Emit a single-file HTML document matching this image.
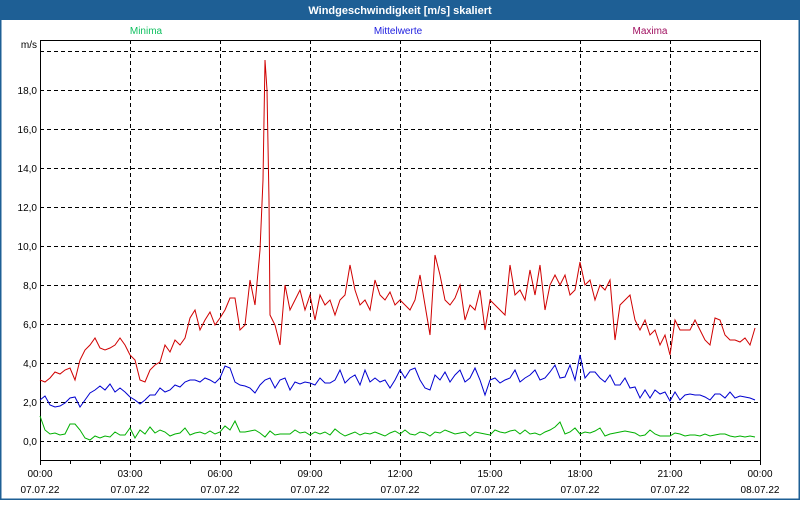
<!DOCTYPE html>
<html><head><meta charset="utf-8"><style>
html,body{margin:0;padding:0;background:#fff;}
body{width:800px;height:500px;overflow:hidden;font-family:"Liberation Sans","DejaVu Sans",sans-serif;}
</style></head><body>
<svg width="800" height="500" viewBox="0 0 800 500" xmlns="http://www.w3.org/2000/svg" font-family="Liberation Sans, DejaVu Sans, sans-serif">
<rect x="0" y="0" width="800" height="500" fill="#fff"/>
<rect x="0.5" y="0.5" width="799" height="499" fill="none" stroke="#1e5f95" stroke-width="2"/>
<rect x="0" y="0" width="800" height="20" fill="#1e5f95"/>
<text x="400" y="14" fill="#fff" font-size="11" font-weight="bold" text-anchor="middle">Windgeschwindigkeit [m/s] skaliert</text>
<text x="146" y="34" fill="#10c060" font-size="10" text-anchor="middle">Minima</text>
<text x="398" y="34" fill="#2020e0" font-size="10" text-anchor="middle">Mittelwerte</text>
<text x="650" y="34" fill="#a01060" font-size="10" text-anchor="middle">Maxima</text>
<g stroke="#000" stroke-width="1" stroke-dasharray="4,3" fill="none">
<path d="M40 51.5H760M40 90.5H760M40 129.5H760M40 168.5H760M40 207.5H760M40 246.5H760M40 285.5H760M40 324.5H760M40 363.5H760M40 402.5H760M40 441.5H760"/>
<path d="M130.5 40V460M220.5 40V460M310.5 40V460M400.5 40V460M490.5 40V460M580.5 40V460M670.5 40V460"/>
</g>
<rect x="40.5" y="40.5" width="720" height="420" fill="none" stroke="#000"/>
<g stroke="#000"><path d="M40.5 460V465M70.5 460V464M100.5 460V464M130.5 460V465M160.5 460V464M190.5 460V464M220.5 460V465M250.5 460V464M280.5 460V464M310.5 460V465M340.5 460V464M370.5 460V464M400.5 460V465M430.5 460V464M460.5 460V464M490.5 460V465M520.5 460V464M550.5 460V464M580.5 460V465M610.5 460V464M640.5 460V464M670.5 460V465M700.5 460V464M730.5 460V464M760.5 460V465"/></g>
<g font-size="10" fill="#000" text-anchor="end">
<text x="37" y="48">m/s</text>
<text x="37" y="94">18,0</text><text x="37" y="133">16,0</text><text x="37" y="172">14,0</text>
<text x="37" y="211">12,0</text><text x="37" y="250">10,0</text><text x="37" y="289">8,0</text>
<text x="37" y="328">6,0</text><text x="37" y="367">4,0</text><text x="37" y="406">2,0</text><text x="37" y="445">0,0</text>
</g>
<g font-size="10" fill="#000" text-anchor="middle">
<text x="40" y="477">00:00</text><text x="40" y="493">07.07.22</text>
<text x="130" y="477">03:00</text><text x="130" y="493">07.07.22</text>
<text x="220" y="477">06:00</text><text x="220" y="493">07.07.22</text>
<text x="310" y="477">09:00</text><text x="310" y="493">07.07.22</text>
<text x="400" y="477">12:00</text><text x="400" y="493">07.07.22</text>
<text x="490" y="477">15:00</text><text x="490" y="493">07.07.22</text>
<text x="580" y="477">18:00</text><text x="580" y="493">07.07.22</text>
<text x="670" y="477">21:00</text><text x="670" y="493">07.07.22</text>
<text x="760" y="477">00:00</text><text x="760" y="493">08.07.22</text>
</g>
<polyline fill="none" stroke="#d00000" stroke-width="1" points="40,380 45,382 50,378 55,372 60,374 65,370 70,368 75,380 80,360 85,350 90,345 95,338 100,348 105,350 110,348 115,345 120,338 125,345 130,355 135,360 140,380 145,382 150,370 155,365 160,362 165,345 170,352 175,340 180,345 185,338 190,318 195,310 200,330 205,320 210,312 215,325 220,318 225,310 230,298 235,298 240,330 245,325 250,280 255,305 260,250 263,180 265,60 267,90 269,200 270,315 275,325 280,345 285,285 290,310 295,300 300,290 305,310 310,295 315,320 320,295 325,305 330,300 335,315 340,300 345,295 350,265 355,290 360,305 365,300 370,310 375,280 380,295 385,300 390,292 395,305 400,300 405,305 410,310 415,300 420,275 425,305 430,335 435,255 440,275 445,300 450,305 455,298 460,285 465,320 470,305 475,310 480,290 485,330 490,300 495,305 500,310 505,315 510,265 515,295 520,290 525,300 530,270 535,295 540,265 545,310 550,285 555,275 560,285 565,275 570,295 575,290 580,262 585,285 590,280 595,300 600,285 605,290 610,280 615,340 620,305 625,300 630,295 635,320 640,330 645,320 650,335 655,330 660,345 665,335 670,355 675,320 680,330 685,330 690,330 695,320 700,330 705,340 710,345 715,318 720,320 725,335 730,340 735,340 740,342 745,338 750,345 755,328"/>
<polyline fill="none" stroke="#0000d0" stroke-width="1" points="40,400 45,396 50,405 55,407 60,406 65,403 70,398 75,397 80,407 85,400 90,393 95,390 100,386 105,390 110,384 115,392 120,388 125,392 130,397 135,400 140,404 145,400 150,395 155,395 160,388 165,392 170,390 175,385 180,387 185,382 190,380 195,380 200,382 205,378 210,380 215,383 220,378 225,366 230,368 235,382 240,385 245,386 250,388 255,393 260,385 265,380 270,378 275,388 280,380 285,378 290,390 295,382 300,384 305,382 310,383 315,385 320,378 325,383 330,383 335,380 340,370 345,383 350,378 355,375 360,385 365,370 370,382 375,378 380,382 385,380 390,388 395,380 400,370 405,378 410,370 415,368 420,380 425,388 430,390 435,375 440,380 445,372 450,382 455,375 460,370 465,382 470,378 475,368 480,380 485,395 490,380 495,378 500,383 505,380 510,378 515,370 520,382 525,378 530,375 535,370 540,380 545,378 550,372 555,365 560,378 565,377 570,365 575,380 580,355 585,378 590,372 595,372 600,378 605,382 610,375 615,385 620,385 625,378 630,388 635,387 640,398 645,390 650,398 655,390 660,394 665,392 670,401 675,392 680,400 685,395 690,394 695,395 700,395 705,397 710,400 715,394 720,394 725,398 730,392 735,398 740,396 745,397 750,398 755,400"/>
<polyline fill="none" stroke="#00b000" stroke-width="1" points="40,416 45,430 50,434 55,433 60,435 65,434 70,424 75,424 80,430 85,438 90,440 95,436 100,438 105,436 110,437 115,432 120,435 125,435 130,428 135,438 140,430 145,434 150,427 155,433 160,430 165,432 170,436 175,434 180,433 185,428 190,435 195,433 200,432 205,434 210,431 215,434 220,432 225,426 230,430 235,421 240,432 245,432 250,431 255,430 260,433 265,437 270,431 275,435 280,434 285,434 290,434 295,430 300,433 305,432 310,435 315,432 320,434 325,432 330,435 335,429 340,433 345,436 350,434 355,432 360,435 365,433 370,434 375,432 380,434 385,436 390,433 395,431 400,434 405,430 410,434 415,435 420,432 425,433 430,436 435,432 440,433 445,430 450,432 455,434 460,433 465,432 470,436 475,432 480,433 485,434 490,435 495,430 500,432 505,433 510,431 515,430 520,434 525,430 530,434 535,433 540,435 545,432 550,430 555,427 560,422 565,434 570,432 575,428 580,434 585,432 590,433 595,431 600,428 605,436 610,434 615,433 620,432 625,431 630,432 635,433 640,436 645,435 650,430 655,434 660,436 665,436 670,436 675,433 680,434 685,436 690,435 695,435 700,436 705,434 710,436 715,435 720,434 725,434 730,436 735,437 740,436 745,437 750,436 755,437"/>
</svg>
</body></html>
